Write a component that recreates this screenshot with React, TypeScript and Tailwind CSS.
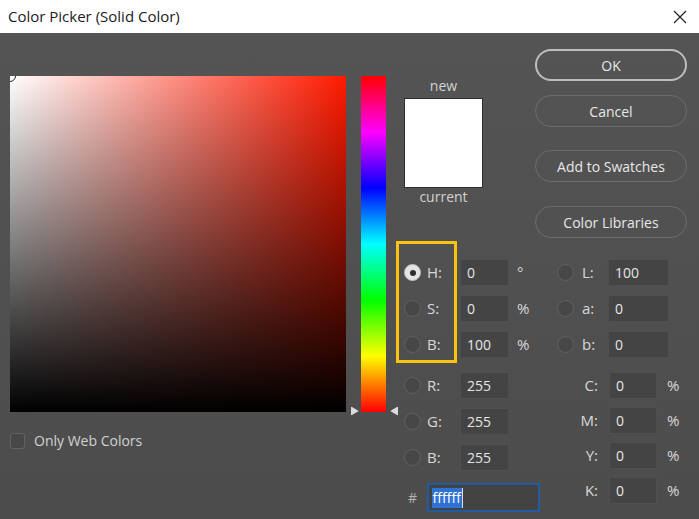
import React from "react";

const font = { fontFamily: '"Open Sans", "Noto Sans", "Liberation Sans", sans-serif' };

function Radio({ selected = false }: { selected?: boolean }) {
  if (selected) {
    return (
      <div className="w-[17px] h-[17px] rounded-full bg-[#e4e4e4] border border-[#bdbdbd] flex items-center justify-center shrink-0">
        <div className="w-[6px] h-[6px] rounded-full bg-[#2e2e2e]" />
      </div>
    );
  }
  return <div className="w-[17px] h-[17px] rounded-full bg-[#474747] border-[1.5px] border-[#626262] shrink-0" />;
}

function Field({ value, w }: { value: string; w: string }) {
  return (
    <div className={`${w} h-[27px] bg-[#444444] border border-[#4f4f4f] flex items-center pl-[6px] text-[14px] text-[#e6e6e6]`}>
      {value}
    </div>
  );
}

function LeftRow({ label, value, unit, selected }: { label: string; value: string; unit?: string; selected?: boolean }) {
  return (
    <div className="flex items-center h-[27px]">
      <div className="ml-[18px]">
        <Radio selected={selected} />
      </div>
      <div className="ml-[6px] w-[33px] text-[15px] text-[#d8d8d8]">{label}</div>
      <Field value={value} w="w-[49px]" />
      {unit && <div className="ml-[8px] text-[15px] text-[#d8d8d8]">{unit}</div>}
    </div>
  );
}

function LabRow({ label, value }: { label: string; value: string }) {
  return (
    <div className="flex items-center h-[27px]">
      <div className="ml-[17px]">
        <Radio />
      </div>
      <div className="ml-[8px] w-[26px] text-[15px] text-[#d8d8d8]">{label}</div>
      <Field value={value} w="w-[61px]" />
    </div>
  );
}

function CmykRow({ label, value }: { label: string; value: string }) {
  return (
    <div className="flex items-center h-[27px]">
      <div className="ml-[33px] w-[25px] text-right text-[15px] text-[#d8d8d8]">{label}</div>
      <div className="ml-[11px]">
        <Field value={value} w="w-[48px]" />
      </div>
      <div className="ml-[10px] text-[15px] text-[#d8d8d8]">%</div>
    </div>
  );
}

function Btn({ children, primary = false, className = "" }: { children: React.ReactNode; primary?: boolean; className?: string }) {
  return (
    <div
      className={`h-[32px] w-[152px] rounded-[16px] flex items-center justify-center text-[14px] text-[#e8e8e8] ${
        primary ? "border-2 border-[#bdbdbd]" : "border border-[#6c6c6c]"
      } ${className}`}
    >
      {children}
    </div>
  );
}

export default function App() {
  return (
    <div className="w-[699px] h-[519px] overflow-hidden bg-white" style={font}>
      {/* Title bar */}
      <div className="h-[33px] bg-white flex items-center justify-between pl-[8px] pr-[12px]">
        <div className="text-[15px] text-[#1b1b1b]">Color Picker (Solid Color)</div>
        <svg width="14" height="14" viewBox="0 0 14 14">
          <path d="M1 1 L13 13 M13 1 L1 13" stroke="#222" strokeWidth="1.2" />
        </svg>
      </div>

      {/* Body */}
      <div className="h-[486px] bg-gradient-to-b from-[#545454] to-[#4c4c4c] flex pl-[10px]">
        {/* Color field column */}
        <div className="w-[336px] flex flex-col">
          <div
            className="relative mt-[43px] w-[336px] h-[336px] overflow-hidden"
            style={{ background: "linear-gradient(to right, #ffffff, #ff1a00)" }}
          >
            <div className="absolute inset-0 bg-gradient-to-b from-transparent to-black" />
            <div className="absolute left-[-6px] top-[-6px] w-[12px] h-[12px] rounded-full border-[1.5px] border-[#222] shadow-[0_0_0_1px_#fff]" />
          </div>
          <div className="mt-[18px] flex items-center">
            <div className="w-[15px] h-[16px] rounded-[3px] bg-[#474747] border border-[#626262]" />
            <div className="ml-[9px] text-[14px] text-[#d2d2d2]">Only Web Colors</div>
          </div>
        </div>

        {/* Hue bar */}
        <div className="relative ml-[15px] mt-[43px] w-[25px] h-[336px]">
          <div
            className="w-full h-full"
            style={{
              background:
                "linear-gradient(to bottom, #ff0000 0%, #ff00ff 16.67%, #0000ff 33.33%, #00ffff 50%, #00ff00 66.67%, #ffff00 83.33%, #ff0000 100%)",
            }}
          />
          <svg className="absolute left-[-11px] bottom-[-4px]" width="9" height="10" viewBox="0 0 9 10">
            <path d="M1 1.5 Q1 0.5 2 1 L8 4.5 Q9 5 8 5.5 L2 9 Q1 9.5 1 8.5 Z" fill="#dcdcdc" />
          </svg>
          <svg className="absolute right-[-13px] bottom-[-4px]" width="9" height="10" viewBox="0 0 9 10">
            <path d="M8 1.5 Q8 0.5 7 1 L1 4.5 Q0 5 1 5.5 L7 9 Q8 9.5 8 8.5 Z" fill="#dcdcdc" />
          </svg>
        </div>

        {/* Right side */}
        <div className="w-[313px] flex flex-col">
          {/* Top: swatch + buttons */}
          <div className="h-[208px] flex">
            <div className="ml-[18px] w-[79px] flex flex-col items-center">
              <div className="mt-[44px] text-[14px] leading-[18px] text-[#d2d2d2]">new</div>
              <div className="mt-[3px] w-[79px] h-[90px] bg-white border border-[#2e2e2e]" />
              <div className="text-[14px] leading-[18px] text-[#d2d2d2]">current</div>
            </div>
            <div className="ml-[52px] mt-[16px] flex flex-col">
              <Btn primary>OK</Btn>
              <Btn className="mt-[14px]">Cancel</Btn>
              <Btn className="mt-[23px]">Add to Swatches</Btn>
              <Btn className="mt-[24px]">Color Libraries</Btn>
            </div>
          </div>

          {/* Fields */}
          <div className="relative flex">
            <div className="w-[154px] flex flex-col pt-[18px]">
              <div className="flex flex-col gap-[9px]">
                <LeftRow label="H:" value="0" unit="°" selected />
                <LeftRow label="S:" value="0" unit="%" />
                <LeftRow label="B:" value="100" unit="%" />
              </div>
              <div className="mt-[14px] flex flex-col gap-[9px]">
                <LeftRow label="R:" value="255" />
                <LeftRow label="G:" value="255" />
                <LeftRow label="B:" value="255" />
              </div>
              <div className="mt-[12px] flex items-center h-[29px]">
                <div className="ml-[22px] w-[19px] text-[14px] text-[#b4b4b4]">#</div>
                <div className="w-[116px] h-[29px] bg-[#434343] border-2 border-[#1f5ca3] flex items-center pl-[3px]">
                  <span className="bg-[#2f72d4] text-white text-[14px] leading-[20px] px-[1px]">ffffff</span>
                  <span className="w-[1px] h-[20px] bg-[#e0e0e0]" />
                </div>
              </div>
            </div>
            <div className="flex-1 flex flex-col pt-[18px]">
              <div className="flex flex-col gap-[9px]">
                <LabRow label="L:" value="100" />
                <LabRow label="a:" value="0" />
                <LabRow label="b:" value="0" />
              </div>
              <div className="mt-[14px] flex flex-col gap-[8px]">
                <CmykRow label="C:" value="0" />
                <CmykRow label="M:" value="0" />
                <CmykRow label="Y:" value="0" />
                <CmykRow label="K:" value="0" />
              </div>
            </div>
            {/* highlight annotation */}
            <div className="absolute left-[10px] top-0 w-[61px] h-[122px] border-[3px] border-[#fbc20f] pointer-events-none" />
          </div>
        </div>
      </div>
    </div>
  );
}
